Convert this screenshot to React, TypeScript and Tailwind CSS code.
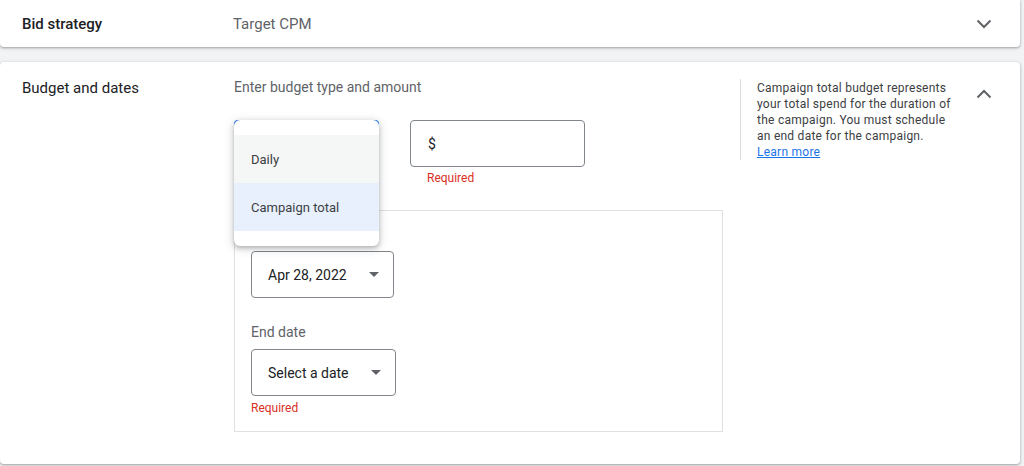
import React from 'react';

const Chevron: React.FC<{ up?: boolean }> = ({ up }) => (
  <svg width="16" height="10" viewBox="0 0 16 10" className="block">
    <polyline
      points={up ? '1.5,8.5 8,2 14.5,8.5' : '1.5,1.5 8,8 14.5,1.5'}
      fill="none"
      stroke="#5f6368"
      strokeWidth="2"
    />
  </svg>
);

const Caret: React.FC = () => (
  <svg width="10" height="5" viewBox="0 0 10 5" className="block">
    <path d="M0 0l5 5 5-5z" fill="#5f6368" />
  </svg>
);

const cardShadow =
  'bg-white shadow-[0_1px_2px_0_rgba(60,64,67,0.3),0_1px_3px_1px_rgba(60,64,67,0.15)]';

const DateSelect: React.FC<{ value: string; width: string }> = ({ value, width }) => (
  <div
    className={`${width} h-[47px] flex items-center justify-between pl-[16px] pr-[14px] border border-[#80868b] rounded-[4px] text-[14px] text-[#202124]`}
  >
    <span className="pt-[1px]">{value}</span>
    <Caret />
  </div>
);

const App: React.FC = () => {
  return (
    <div
      className="w-[1024px] h-[466px] overflow-hidden bg-[#f1f3f4] pr-[4px]"
      style={{ fontFamily: 'Roboto, "Liberation Sans", Arial, sans-serif' }}
    >
      {/* Bid strategy row */}
      <div className={`${cardShadow} h-[47px] rounded-b-[4px] flex items-center`}>
        <div className="w-[233px] pl-[22px] pt-[1px] text-[15px] font-medium text-[#202124]">Bid strategy</div>
        <div className="pt-[1px] text-[15px] text-[#5f6368]">Target CPM</div>
        <div className="ml-auto mr-[28px]">
          <Chevron />
        </div>
      </div>

      {/* Budget and dates */}
      <div className={`${cardShadow} mt-[15px] h-[402px] rounded-[4px] flex items-start pt-[15px]`}>
        <div className="w-[234px] pl-[22px] text-[15px] leading-[20px] text-[#202124] pt-[1px]">
          Budget and dates
        </div>

        <div className="w-[489px]">
          <div className="text-[14px] leading-[20px] text-[#5f6368]">Enter budget type and amount</div>

          <div className="mt-[23px] flex items-start">
            <div className="relative w-[145px] h-[47px]">
              <div className="w-full h-full border-2 border-[#1a73e8] rounded-[4px]" />
              <div className="absolute left-0 top-0 z-10 w-[145px] bg-white rounded-[6px] py-[15px] shadow-[0_2px_4px_rgba(60,64,67,0.3),0_2px_8px_2px_rgba(60,64,67,0.15)]">
                <div className="h-[48px] flex items-center pl-[17px] pt-[2px] bg-[#f5f6f6] text-[13px] text-[#3c4043]">
                  Daily
                </div>
                <div className="h-[48px] flex items-center pl-[17px] pt-[2px] bg-[#e8f0fe] text-[13px] text-[#3c4043]">
                  Campaign total
                </div>
              </div>
            </div>

            <div className="ml-[31px] w-[175px]">
              <div className="h-[47px] border border-[#80868b] rounded-[4px] flex items-center pl-[17px] pt-[1px] text-[14px] text-[#202124]">
                $
              </div>
              <div className="mt-[3px] pl-[17px] text-[12px] leading-[16px] text-[#d93025]">Required</div>
            </div>
          </div>

          <div className="mt-[24px] border border-[#e0e0e0] pl-[16px] pt-[13px] pb-[15px]">
            <div className="text-[14px] leading-[20px] text-[#5f6368] mb-[7px]">Start date</div>
            <DateSelect value="Apr 28, 2022" width="w-[143px]" />
            <div className="mt-[24px] text-[14px] leading-[20px] text-[#5f6368] mb-[7px]">End date</div>
            <DateSelect value="Select a date" width="w-[145px]" />
            <div className="mt-[4px] text-[12px] leading-[16px] text-[#d93025]">Required</div>
          </div>
        </div>

        <div className="ml-[17px] mt-[2px] w-[217px] border-l border-[#dadce0] pl-[16px] text-[12px] leading-[16px] tracking-[0.25px] text-[#3c4043]">
          <div className="pt-[1px]">
            Campaign total budget represents your total spend for the duration of the campaign. You must
            schedule an end date for the campaign.
          </div>
          <a href="#" className="text-[#1a73e8] underline">
            Learn more
          </a>
        </div>

        <div className="ml-auto mr-[28px] mt-[12px]">
          <Chevron up />
        </div>
      </div>
    </div>
  );
};

export default App;
